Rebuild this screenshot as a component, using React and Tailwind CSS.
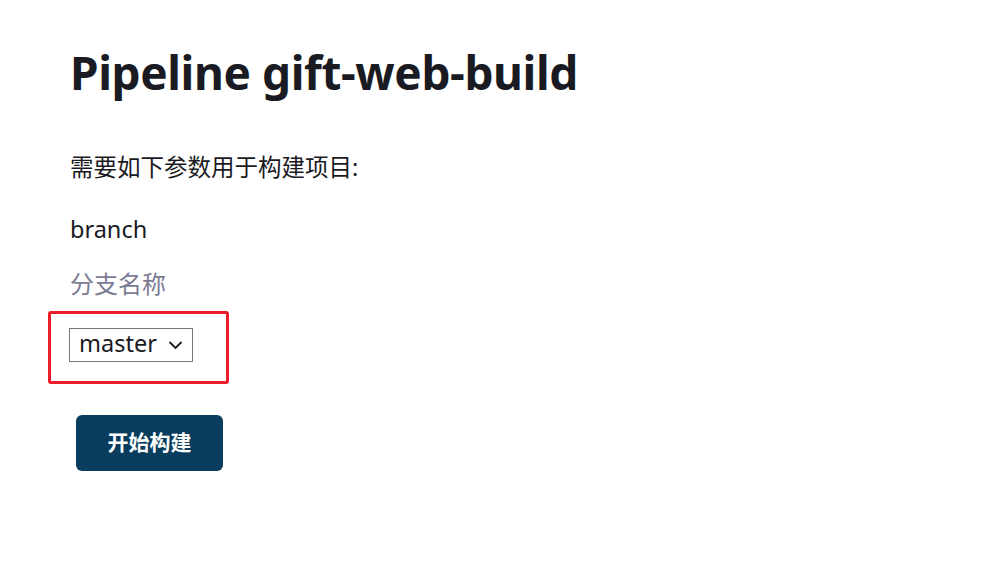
export default function App() {
    return (
        <div
            className="min-h-[564px] bg-white px-[70px] pt-[40px] text-[#1a1a22]"
            style={{ fontFamily: '"Noto Sans", "Noto Sans CJK SC", sans-serif' }}
        >
            <h1 className="text-[46px] font-bold leading-[64px] tracking-[-0.4px]">
                Pipeline gift-web-build
            </h1>

            <p className="mt-[47px] text-[23.5px] leading-[32px]">需要如下参数用于构建项目:</p>

            <div className="mt-[30px] text-[23.5px] leading-[32px]">branch</div>
            <div className="mt-[23px] text-[24px] leading-[32px] text-[#7b7b93]">分支名称</div>

            <div className="-ml-[22px] mt-[11px] w-[181px] rounded-[3px] border-[3px] border-[#ec1c2b] pb-[19px] pl-[18px] pt-[14px]">
                <div className="inline-flex h-[34px] items-center gap-[11px] border border-[#767676] pl-[9px] pr-[9px] text-[23.5px] leading-none">
                    <span className="-mt-[2px]">master</span>
                    <svg width="15" height="10" viewBox="0 0 15 10" fill="none">
                        <path d="M1.5 2L7.5 8L13.5 2" stroke="#1a1a22" strokeWidth="1.8" />
                    </svg>
                </div>
            </div>

            <button className="ml-[6px] mt-[31px] flex h-[56px] w-[147px] items-center justify-center rounded-[6px] bg-[#093d5e] text-[21px] font-bold text-white">
                开始构建
            </button>
        </div>
    );
}
